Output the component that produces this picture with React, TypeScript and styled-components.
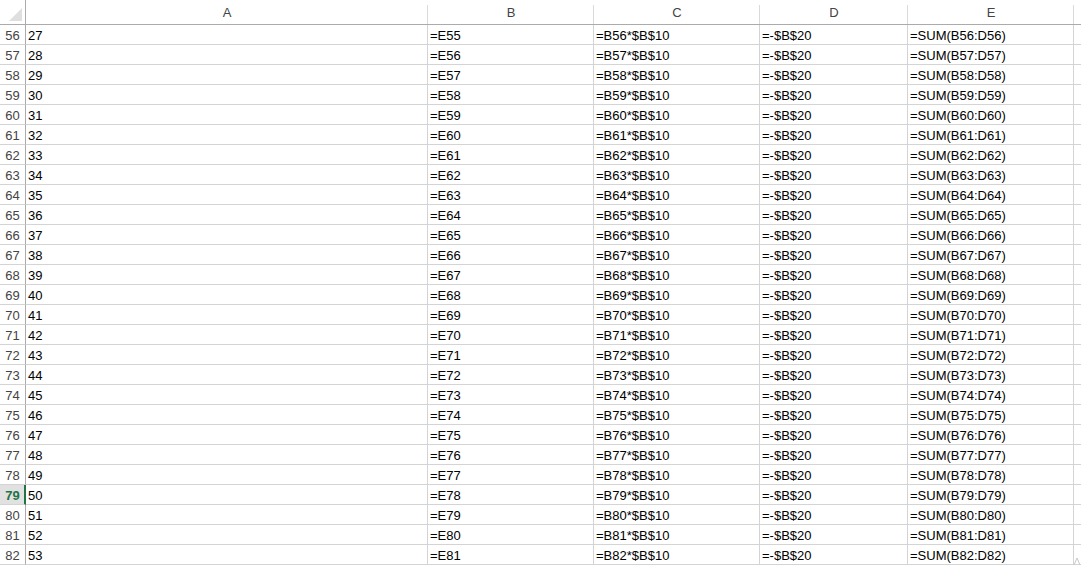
import React from "react";
import styled, { createGlobalStyle } from "styled-components";

const GlobalStyle = createGlobalStyle`
  html, body {
    margin: 0;
    padding: 0;
    background: #ffffff;
    overflow: hidden;
  }
`;

const COLS = [
  { key: "A", width: 402 },
  { key: "B", width: 166 },
  { key: "C", width: 166 },
  { key: "D", width: 148 },
  { key: "E", width: 166 },
];

const Sheet = styled.div`
  display: grid;
  grid-template-columns: 26px ${COLS.map((c) => `${c.width}px`).join(" ")} 1fr;
  grid-auto-rows: 20px;
  grid-template-rows: 25px;
  width: 1081px;
  height: 565px;
  overflow: hidden;
  font-family: "Liberation Sans", Arial, sans-serif;
  font-size: 13px;
  color: #000;
  background: #fff;
`;

const Corner = styled.div`
  position: relative;
  border-right: 1px solid #ababab;
  border-bottom: 1px solid #ababab;
  background: #fff;

  &::after {
    content: "";
    position: absolute;
    right: 3px;
    bottom: 3px;
    width: 0;
    height: 0;
    border-left: 13px solid transparent;
    border-bottom: 13px solid #dfdfdf;
  }
`;

const ColHead = styled.div<{ $last?: boolean }>`
  position: relative;
  display: flex;
  align-items: center;
  justify-content: center;
  padding-top: 1px;
  border-bottom: 1px solid #ababab;
  color: #444;
  font-size: 13px;

  &::after {
    content: "";
    display: ${({ $last }) => ($last ? "none" : "block")};
    position: absolute;
    right: 0;
    top: 5px;
    bottom: 0;
    width: 1px;
    background: #dadada;
  }
`;

const RowHead = styled.div<{ $active?: boolean }>`
  display: flex;
  align-items: center;
  justify-content: center;
  box-sizing: border-box;
  padding-top: 1px;
  border-bottom: 1px solid #d4d4d4;
  border-right: ${({ $active }) =>
    $active ? "2px solid #217346" : "1px solid #ababab"};
  background: ${({ $active }) => ($active ? "#e1e1e1" : "#fff")};
  color: ${({ $active }) => ($active ? "#217346" : "#444")};
  font-weight: ${({ $active }) => ($active ? 700 : 400)};
  font-size: 13px;
  padding-left: ${({ $active }) => ($active ? "1px" : "0")};
`;

const Cell = styled.div<{ $filler?: boolean }>`
  display: flex;
  align-items: center;
  box-sizing: border-box;
  padding: 1px 0 0 2px;
  border-bottom: 1px solid #d4d4d4;
  border-right: ${({ $filler }) => ($filler ? "none" : "1px solid #d4d4d4")};
  white-space: nowrap;
  overflow: hidden;
`;

const Grip = styled.svg`
  position: absolute;
  right: 0;
  bottom: 0;
`;

const Wrap = styled.div`
  position: relative;
`;

const rows = Array.from({ length: 27 }, (_, i) => 56 + i);

export default function App() {
  return (
    <Wrap>
      <GlobalStyle />
      <Sheet>
        <Corner />
        {COLS.map((c) => (
          <ColHead key={c.key}>{c.key}</ColHead>
        ))}
        <ColHead $last />
        {rows.map((r) => (
          <React.Fragment key={r}>
            <RowHead $active={r === 79}>{r}</RowHead>
            <Cell>{r - 29}</Cell>
            <Cell>{`=E${r - 1}`}</Cell>
            <Cell>{`=B${r}*$B$10`}</Cell>
            <Cell>=-$B$20</Cell>
            <Cell>{`=SUM(B${r}:D${r})`}</Cell>
            <Cell $filler />
          </React.Fragment>
        ))}
      </Sheet>
      <Grip width="8" height="10" viewBox="0 0 8 10">
        <path d="M1 10 L4 3 L7 10" fill="none" stroke="#c8c8c8" strokeWidth="1" />
      </Grip>
    </Wrap>
  );
}
